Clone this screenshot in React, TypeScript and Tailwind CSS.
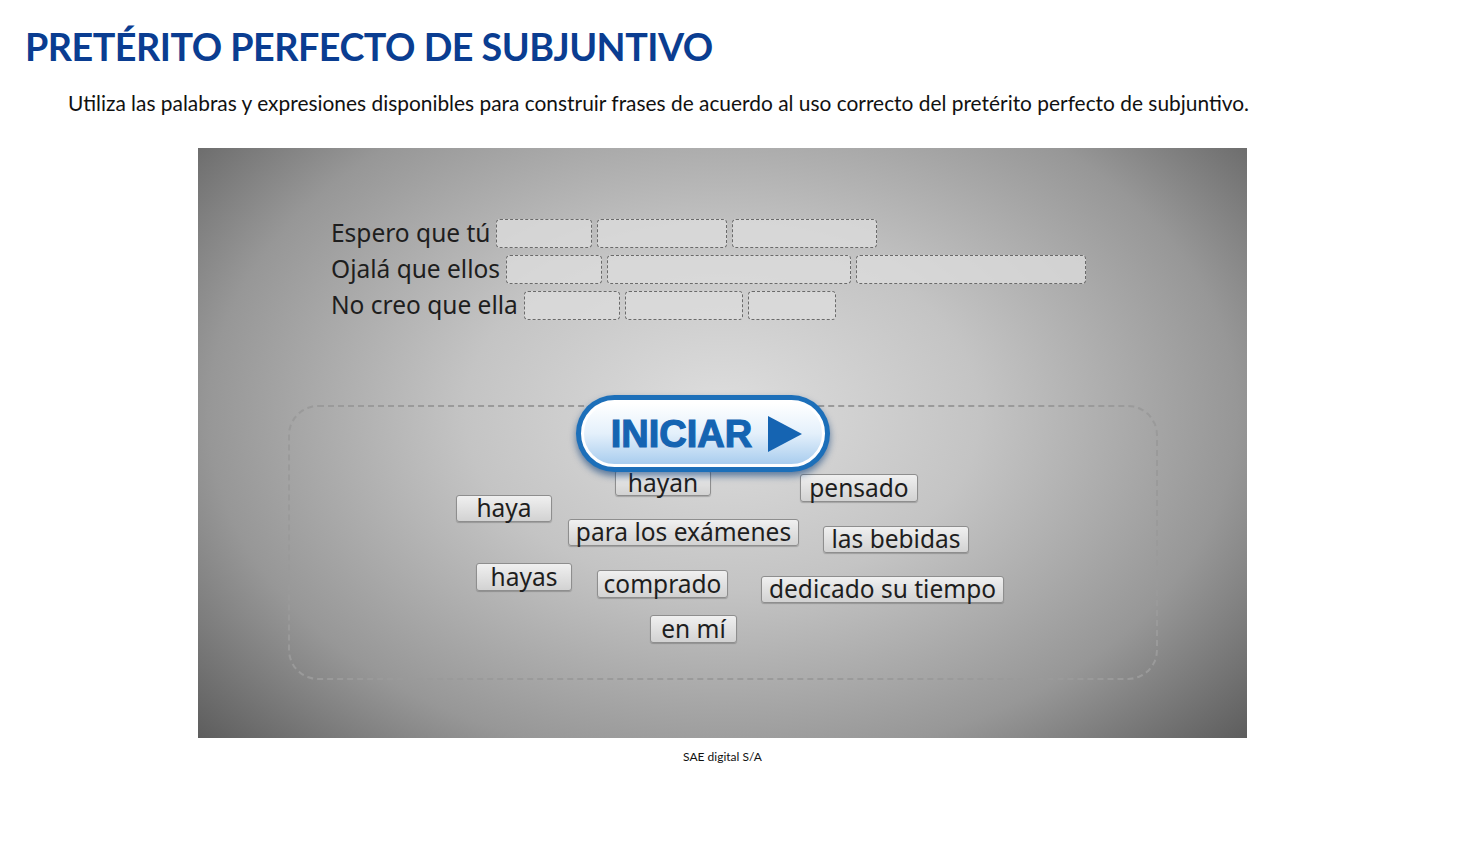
import React from 'react';

type Chip = { text: string; x: number; y: number; w: number; h: number };

const rows: { label: string; boxes: number[] }[] = [
  { label: 'Espero que tú', boxes: [96, 130, 145] },
  { label: 'Ojalá que ellos', boxes: [96, 244, 230] },
  { label: 'No creo que ella', boxes: [96, 118, 88] },
];

const chips: Chip[] = [
  { text: 'hayan', x: 417, y: 322, w: 96, h: 26 },
  { text: 'pensado', x: 602, y: 326, w: 118, h: 28 },
  { text: 'haya', x: 258, y: 347, w: 96, h: 27 },
  { text: 'para los exámenes', x: 370, y: 371, w: 231, h: 27 },
  { text: 'las bebidas', x: 625, y: 378, w: 146, h: 27 },
  { text: 'hayas', x: 278, y: 415, w: 96, h: 28 },
  { text: 'comprado', x: 399, y: 422, w: 131, h: 28 },
  { text: 'dedicado su tiempo', x: 563, y: 428, w: 243, h: 27 },
  { text: 'en mí', x: 452, y: 467, w: 87, h: 28 },
];

const App: React.FC = () => {
  return (
    <div className="min-h-screen bg-white font-['Lato',sans-serif]">
      <h1 className="pl-[25px] pt-[25px] text-[37.7px] leading-[44px] font-bold tracking-[-0.5px] text-[#0a3d91]">
        PRETÉRITO PERFECTO DE SUBJUNTIVO
      </h1>
      <p className="pl-[68px] mt-[21px] text-[20.9px] leading-[26px] text-[#111]">
        Utiliza las palabras y expresiones disponibles para construir frases de acuerdo al uso correcto del pretérito perfecto de subjuntivo.
      </p>

      <div className="ml-[198px] mt-[32px] w-[1049px]">
        <div className="relative h-[590px] overflow-hidden bg-[radial-gradient(ellipse_70%_85%_at_50%_45%,#dedede_0%,#c4c4c4_35%,#979797_70%,#555555_100%)] font-['Noto_Sans',sans-serif]">
          <div className="flex flex-col gap-[7px] pl-[133px] pt-[71px]">
            {rows.map((r) => (
              <div key={r.label} className="flex items-center h-[29px]">
                <span className="text-[24.5px] leading-none text-[#1e1e1e] mr-[6px]">{r.label}</span>
                <div className="flex gap-[5px]">
                  {r.boxes.map((w, i) => (
                    <div
                      key={i}
                      style={{ width: w }}
                      className="h-[29px] rounded-[4px] border border-dashed border-[#6a6a6a] bg-[#dcdcdc]/80"
                    />
                  ))}
                </div>
              </div>
            ))}
          </div>

          <div className="ml-[90px] mt-[85px] w-[870px] h-[275px] rounded-[30px] border-2 border-dashed border-[#9a9a9a]" />

          {chips.map((c) => (
            <div
              key={c.text}
              style={{ left: c.x, top: c.y, width: c.w, height: c.h }}
              className="absolute flex items-center justify-center rounded-[3px] border border-[#8e8e8e] bg-gradient-to-b from-[#f0f0f0] to-[#d2d2d2] text-[24.5px] leading-none text-[#1e1e1e] shadow-[0_1px_1px_rgba(0,0,0,0.2)]"
            >
              {c.text}
            </div>
          ))}

          <div className="absolute left-[378px] top-[247px] w-[254px] h-[77px] rounded-full bg-[#1c6fb9] p-[5px] shadow-[0_4px_7px_rgba(10,60,120,0.6)]">
            <div className="flex h-full items-center justify-center gap-[14px] rounded-full border-[3px] border-white bg-gradient-to-b from-[#ffffff] via-[#e4f0fb] to-[#a9cdee] pl-[8px]">
              <span className="font-['Liberation_Sans',sans-serif] text-[38px] font-bold leading-none text-[#1564b2] [-webkit-text-stroke:1.2px_#1564b2]">
                INICIAR
              </span>
              <svg width="37" height="38" viewBox="0 0 37 38">
                <path d="M2 1 L36 19 L2 37 Z" fill="#1564b2" />
              </svg>
            </div>
          </div>
        </div>
        <p className="mt-[10px] text-center text-[12px] text-[#111]">SAE digital S/A</p>
      </div>
    </div>
  );
};

export default App;
